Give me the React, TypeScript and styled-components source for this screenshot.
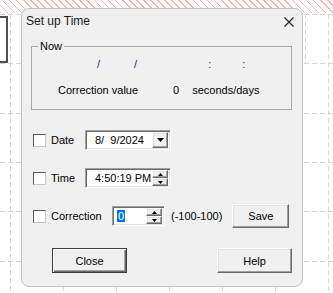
import React from 'react'
import styled, { createGlobalStyle } from 'styled-components'

const GlobalStyle = createGlobalStyle`
  html, body { margin: 0; padding: 0; background: #fff; }
  body { font-family: "Liberation Sans", Arial, sans-serif; }
`

// ---------- desktop background ----------
const Desk = styled.div`
  position: relative;
  width: 333px;
  height: 293px;
  overflow: hidden;
  box-sizing: border-box;
  padding: 8px 0 0 21px;
  background: #fff;
`

const Hatch = styled.div`
  position: absolute;
  left: 0; right: 0; top: 0;
  height: 13px;
  background: repeating-linear-gradient(45deg, #f3b4b4 0 1.2px, transparent 1.2px 5px);
`

const SideBox = styled.div`
  position: absolute;
  left: -12px; top: 16px;
  width: 16px; height: 43px;
  border: 2px solid #505050;
`

const GridLines = styled.svg`
  position: absolute;
  inset: 0;
`

const hLines = [14.5, 63.5, 113.5, 162.5, 211.5, 261.5]
const vLines = [10.5, 63.5, 116.5, 169.5, 222.5, 275.5, 328.5]

const Backdrop = () => (
  <>
    <GridLines width="333" height="293" aria-hidden="true">
      <g stroke="#d6d6d6" strokeWidth="1" strokeDasharray="5 3" fill="none">
        {hLines.map(y => <line key={'h' + y} x1="0" y1={y} x2="333" y2={y} />)}
        {vLines.map(x => <line key={'v' + x} x1={x} y1="14" x2={x} y2="293" />)}
        <line x1="305.5" y1="14" x2="305.5" y2="64" />
      </g>
    </GridLines>
    <Hatch />
    <SideBox />
  </>
)

// ---------- dialog ----------
const Dialog = styled.div`
  position: relative;
  width: 282px;
  height: 279px;
  box-sizing: border-box;
  border: 1px solid #c2c2c2;
  border-radius: 8px;
  background: #f0f0f0;
  display: flex;
  flex-direction: column;
  font-size: 11px;
  color: #000;
`

const TitleBar = styled.div`
  height: 31px;
  box-sizing: border-box;
  padding: 5px 8px 0 4px;
  display: flex;
  justify-content: space-between;
  align-items: flex-start;
`

const Title = styled.span`
  font-size: 12px;
  line-height: 15px;
  color: #1a1a1a;
`

const CloseX = styled.svg`
  margin-top: 3px;
`

const Group = styled.div`
  position: relative;
  margin: 6px 10px 0 9px;
  height: 64px;
  box-sizing: border-box;
  border: 1px solid #a8a8a8;
  padding-top: 11px;
`

const Legend = styled.span`
  position: absolute;
  top: -7px; left: 6px;
  padding: 0 2px;
  line-height: 13px;
  background: #f0f0f0;
`

const InfoRow = styled.div<{ $indent: number; $top?: number }>`
  display: flex;
  line-height: 13px;
  white-space: pre;
  padding-left: ${p => p.$indent}px;
  margin-top: ${p => p.$top ?? 0}px;
`

const Sep = styled.span<{ $offset: number; $tint: string }>`
  margin-left: ${p => p.$offset}px;
  color: ${p => p.$tint};
`

const Val = styled.span<{ $offset?: number }>`
  margin-left: ${p => p.$offset ?? 0}px;
`

const FormRow = styled.div<{ $top: number; $h: number }>`
  display: flex;
  align-items: center;
  height: ${p => p.$h}px;
  margin-top: ${p => p.$top}px;
  padding-left: 11px;
`

const Check = styled.span`
  width: 13px;
  height: 13px;
  box-sizing: border-box;
  background: #fff;
  border: 1px solid;
  border-color: #5a5a5a #c8c8c8 #c8c8c8 #5a5a5a;
`

const Label = styled.span<{ $w: number }>`
  width: ${p => p.$w}px;
  margin-left: 5px;
  line-height: 13px;
`

const Field = styled.div<{ $w: number }>`
  width: ${p => p.$w}px;
  height: 20px;
  box-sizing: border-box;
  background: #fff;
  border: 1px solid;
  border-color: #a0a0a0 #fff #fff #a0a0a0;
  box-shadow: inset 1px 1px 0 #696969, inset -1px -1px 0 #e3e3e3;
  padding: 2px;
  display: flex;
  align-items: center;
`

const FieldText = styled.span<{ $pad: number }>`
  flex: 1;
  padding-left: ${p => p.$pad}px;
  white-space: pre;
  line-height: 13px;
`

const Selected = styled.span`
  background: #0078d7;
  color: #fff;
  padding: 0 1px;
`

const raised = `
  box-sizing: border-box;
  background: #f0f0f0;
  border: 1px solid;
  border-color: #fff #696969 #696969 #fff;
  box-shadow: inset -1px -1px 0 #a0a0a0, inset 1px 1px 0 #e3e3e3;
`

const DropBtn = styled.span`
  ${raised}
  width: 16px;
  height: 16px;
  display: grid;
  place-items: center;
`

const Spin = styled.span`
  width: 16px;
  height: 16px;
  display: flex;
  flex-direction: column;
`

const SpinHalf = styled.span`
  ${raised}
  flex: 1;
  display: grid;
  place-items: center;
`

const Hint = styled.span`
  margin-left: 6px;
  line-height: 13px;
`

const Button = styled.button<{ $w: number; $h: number; $default?: boolean }>`
  ${raised}
  width: ${p => p.$w}px;
  height: ${p => p.$h}px;
  padding: 0;
  font-family: inherit;
  font-size: 11px;
  color: #000;
  ${p => p.$default && `
    border-color: #3c3c3c;
    box-shadow: inset 1px 1px 0 #fff, inset -1px -1px 0 #696969, inset -2px -2px 0 #a0a0a0;
  `}
`

const SaveButton = styled(Button)`
  margin-left: 10px;
`

const ButtonBar = styled.div`
  display: flex;
  justify-content: space-between;
  margin-top: 20px;
  padding: 0 10px 0 30px;
`

const DownArrow = () => (
  <svg width="7" height="4" aria-hidden="true"><path d="M0 0h7L3.5 4z" fill="#000" /></svg>
)

const TinyArrow = ({ up }: { up?: boolean }) => (
  <svg width="5" height="3" aria-hidden="true">
    <path d={up ? 'M2.5 0L5 3H0z' : 'M0 0h5L2.5 3z'} fill="#000" />
  </svg>
)

const Spinner = () => (
  <Spin>
    <SpinHalf><TinyArrow up /></SpinHalf>
    <SpinHalf><TinyArrow /></SpinHalf>
  </Spin>
)

export default function App() {
  return (
    <Desk>
      <GlobalStyle />
      <Backdrop />
      <Dialog>
        <TitleBar>
          <Title>Set up Time</Title>
          <CloseX width="10" height="10" viewBox="0 0 10 10" aria-label="Close">
            <path d="M0.5 0.5L9.5 9.5M9.5 0.5L0.5 9.5" stroke="#222" strokeWidth="1.1" />
          </CloseX>
        </TitleBar>

        <Group>
          <Legend>Now</Legend>
          <InfoRow $indent={65}>
            <Sep $offset={0} $tint="#1d2670">/</Sep>
            <Sep $offset={34} $tint="#1d2670">/</Sep>
            <Sep $offset={71} $tint="#5b1f70">:</Sep>
            <Sep $offset={31} $tint="#5b1f70">:</Sep>
          </InfoRow>
          <InfoRow $indent={26} $top={13}>
            <Val>Correction value</Val>
            <Val $offset={35}>0</Val>
            <Val $offset={13}>seconds/days</Val>
          </InfoRow>
        </Group>

        <FormRow $top={20} $h={20}>
          <Check />
          <Label $w={34}>Date</Label>
          <Field $w={86}>
            <FieldText $pad={7}>{'8/  9/2024'}</FieldText>
            <DropBtn><DownArrow /></DropBtn>
          </Field>
        </FormRow>

        <FormRow $top={18} $h={20}>
          <Check />
          <Label $w={34}>Time</Label>
          <Field $w={86}>
            <FieldText $pad={7}>4:50:19 PM</FieldText>
            <Spinner />
          </Field>
        </FormRow>

        <FormRow $top={16} $h={24}>
          <Check />
          <Label $w={61}>Correction</Label>
          <Field $w={53}>
            <FieldText $pad={2}><Selected>0</Selected></FieldText>
            <Spinner />
          </Field>
          <Hint>(-100-100)</Hint>
          <SaveButton $w={57} $h={24}>Save</SaveButton>
        </FormRow>

        <ButtonBar>
          <Button $w={75} $h={25} $default>Close</Button>
          <Button $w={75} $h={25}>Help</Button>
        </ButtonBar>
      </Dialog>
    </Desk>
  )
}
